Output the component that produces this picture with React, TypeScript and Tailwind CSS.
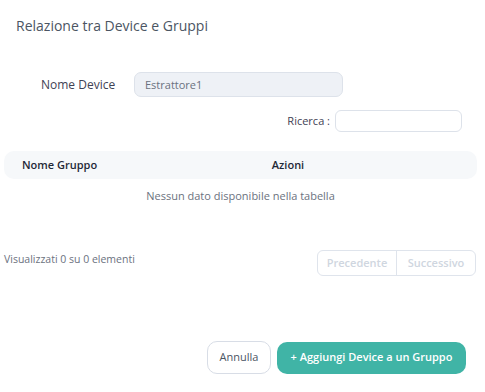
import React from "react";

export default function App() {
  return (
    <div
      className="w-[485px] h-[392px] bg-white relative overflow-hidden text-[#3f4254]"
      style={{ fontFamily: '"Open Sans", "Noto Sans", sans-serif' }}
    >
      <div className="pl-4 pt-[16px] h-[52px]">
        <h2 className="text-[14px] leading-[20px] text-[#4b5563]">Relazione tra Device e Gruppi</h2>
      </div>

      <div className="flex items-center mt-[20px] h-[25px]">
        <label className="w-[134px] pl-[41px] text-[12px] text-[#3f4254]">Nome Device</label>
        <input
          readOnly
          value="Estrattore1"
          className="w-[209px] h-[25px] rounded-[7px] bg-[#eef1f6] border border-[#dde2ea] px-[10px] text-[11px] text-[#6b7280] outline-none"
        />
      </div>

      <div className="flex items-center justify-end pr-[23px] mt-[13px] h-[22px] gap-[5px]">
        <span className="text-[11px] text-[#3f4254]">Ricerca :</span>
        <input className="w-[127px] h-[22px] rounded-[6px] border border-[#dde2ea] outline-none" />
      </div>

      <div className="mx-[4px] w-[473px] mt-[19px]">
        <div className="flex items-center h-[28px] rounded-[10px] bg-[#f6f8fa] text-[11px] font-semibold text-[#1f2937]">
          <div className="pl-[18px] w-[230px]">Nome Gruppo</div>
          <div className="w-[108px] text-center">Azioni</div>
        </div>
        <div className="text-center text-[11px] text-[#6b7280] mt-[8px] leading-[18px]">
          Nessun dato disponibile nella tabella
        </div>
      </div>

      <div className="flex items-start justify-between pl-[4px] pr-[9px] mt-[45px]">
        <span className="text-[10.5px] leading-[18px] text-[#6b7280]">Visualizzati 0 su 0 elementi</span>
        <div className="flex h-[26px] border border-[#dfe4ec] rounded-[6px] text-[11px] font-semibold text-[#cfd6e0]">
          <div className="w-[79px] flex items-center justify-center border-r border-[#dfe4ec]">Precedente</div>
          <div className="w-[78px] flex items-center justify-center">Successivo</div>
        </div>
      </div>

      <div className="flex justify-end items-center gap-[6px] pr-[19px] mt-[65px]">
        <button className="w-[64px] h-[33px] rounded-[10px] border border-[#d8dde6] text-[11px] text-[#4b5563] bg-white">
          Annulla
        </button>
        <button className="w-[189px] h-[32px] rounded-[10px] bg-[#40b4a6] text-white text-[11px] font-semibold">
          + Aggiungi Device a un Gruppo
        </button>
      </div>
    </div>
  );
}
